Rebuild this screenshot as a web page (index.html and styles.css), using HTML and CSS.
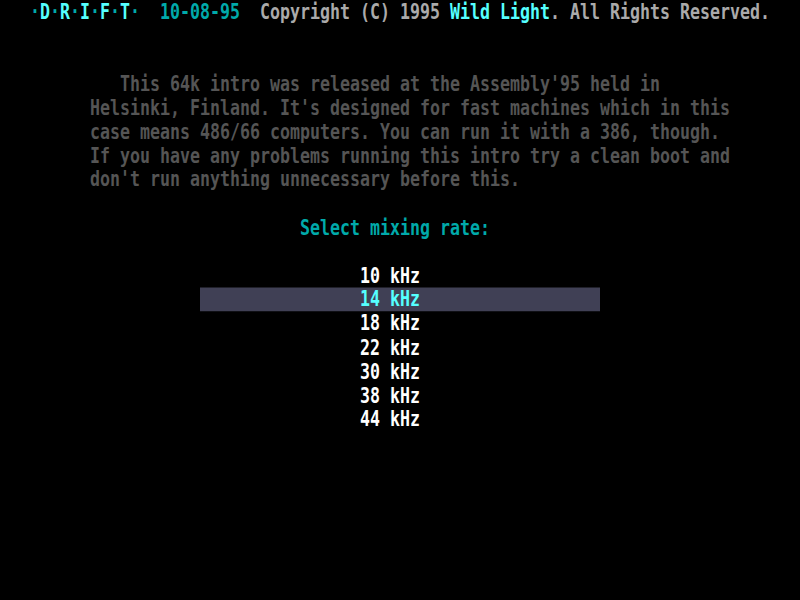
FILE: index.html
```html
<!DOCTYPE html>
<html>
<head>
<meta charset="utf-8">
<link rel="stylesheet" href="styles.css">
</head>
<body>
<div class="screen">
  <div class="row header"><span class="dim">·</span><span class="hi">D</span><span class="dim">·</span><span class="hi">R</span><span class="dim">·</span><span class="hi">I</span><span class="dim">·</span><span class="hi">F</span><span class="dim">·</span><span class="hi">T</span><span class="dim">·</span>  <span class="dim">10-08-95</span>  Copyright (C) 1995 <span class="hi">Wild Light</span>. All Rights Reserved.</div>
  <div class="row"></div>
  <div class="row"></div>
  <div class="intro">
    <div class="row">   This 64k intro was released at the Assembly'95 held in</div>
    <div class="row">Helsinki, Finland. It's designed for fast machines which in this</div>
    <div class="row">case means 486/66 computers. You can run it with a 386, though.</div>
    <div class="row">If you have any problems running this intro try a clean boot and</div>
    <div class="row">don't run anything unnecessary before this.</div>
  </div>
  <div class="row"></div>
  <div class="row prompt">Select mixing rate:</div>
  <div class="row"></div>
  <div class="menu">
    <div class="row item">10 kHz</div>
    <div class="row item selected">14 kHz</div>
    <div class="row item">18 kHz</div>
    <div class="row item">22 kHz</div>
    <div class="row item">30 kHz</div>
    <div class="row item">38 kHz</div>
    <div class="row item">44 kHz</div>
  </div>
</div>
</body>
</html>
```

FILE: styles.css
```css
html, body {
  margin: 0;
  padding: 0;
  background: #000;
}
body {
  width: 800px;
  height: 600px;
  overflow: hidden;
}
.screen {
  width: 800px;
  height: 480px;
  transform: scaleY(1.25);
  transform-origin: 0 0;
  font-family: "DejaVu Sans Mono", "Liberation Mono", monospace;
  font-size: 16.61px;
  font-weight: bold;
  line-height: 19.2px;
  color: #aaaaaa;
}
.row {
  height: 19.2px;
  white-space: pre;
}
.header {
  padding-left: 30px;
}
.dim {
  color: #00aaaa;
}
.hi {
  color: #55ffff;
}
.intro {
  padding-left: 90px;
  color: #555555;
}
.prompt {
  padding-left: 300px;
  color: #00aaaa;
}
.item {
  padding-left: 360px;
  color: #ffffff;
}
.item.selected {
  margin-left: 200px;
  width: 240px;
  padding-left: 160px;
  background: #404055;
  color: #55ffff;
}
```
